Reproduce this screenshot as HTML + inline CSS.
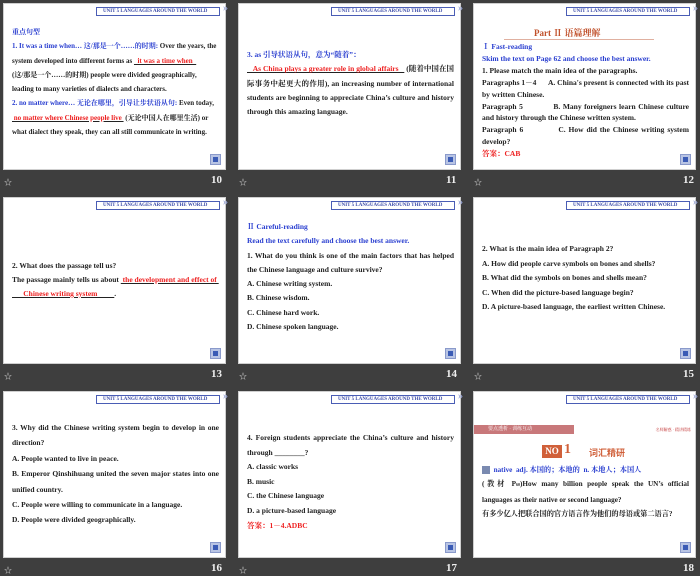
<!DOCTYPE html>
<html><head><meta charset="utf-8">
<style>
*{margin:0;padding:0;box-sizing:border-box}
body{width:700px;height:576px;background:#3e3e3e;position:relative;overflow:hidden;font-family:"Liberation Serif","Noto Serif CJK SC",serif}
.s{position:absolute;width:223px;height:167px;background:#fff;border:1px solid #cfcfcf}
.hd{position:absolute;right:5px;top:3px;width:124px;height:9px;border:1px solid #4a5db5;font-size:5px;color:#3a4aa8;font-weight:bold;line-height:7px;padding-left:6px;white-space:nowrap}
.hd:after{content:"»";position:absolute;right:-9px;top:-3px;font-size:10px;color:#9aa6d8}
.ic{position:absolute;right:4px;bottom:4px;width:11px;height:11px;background:#b8c4e4;border:1px solid #8a9acb}
.ic:before{content:"";position:absolute;left:2px;top:2px;width:5px;height:5px;background:#3a5bb5}
.t{position:absolute;left:8px;right:6px;font-size:7.5px;line-height:14.3px;font-weight:bold;color:#222;text-align:justify}
.b{color:#2a3fd0}.r{color:#ee2020}
.u{text-decoration:underline;text-decoration-color:#222}
.n{position:absolute;color:#eee;font-weight:bold;font-size:11px;font-family:"Liberation Serif",serif}
.st{position:absolute;color:#ddd;font-size:8px}
</style></head><body>

<!-- row 1 -->
<div class="s" style="left:3px;top:3px"><div class="hd">UNIT 5 LANGUAGES AROUND THE WORLD</div>
<div class="t" style="top:21px;font-size:7px;text-align:left"><span class="b">重点句型</span><br><span class="b">1. It was a time when… 这/那是一个……的时期:</span> Over the years, the system developed into different forms as <span class="r u">&nbsp;&nbsp;it was a time when&nbsp;&nbsp;</span><br>(这/那是一个……的时期) people were divided geographically, leading to many varieties of dialects and characters.<br><span class="b">2. no matter where… 无论在哪里，引导让步状语从句:</span> Even today, <span class="r u">&nbsp;no matter where Chinese people live&nbsp;</span> (无论中国人在哪里生活) or what dialect they speak, they can all still communicate in writing.</div>
<div class="ic"></div></div>
<div class="st" style="left:4px;top:177px">☆</div><div class="n" style="left:211px;top:174px">10</div>

<div class="s" style="left:238px;top:3px"><div class="hd">UNIT 5 LANGUAGES AROUND THE WORLD</div>
<div class="t" style="top:44px"><span class="b">3. as 引导状语从句，意为“随着”：</span><br><span class="r u">&nbsp;&nbsp;&nbsp;As China plays a greater role in global affairs&nbsp;&nbsp;&nbsp;</span> (随着中国在国际事务中起更大的作用), an increasing number of international students are beginning to appreciate China’s culture and history through this amazing language.</div>
<div class="ic"></div></div>
<div class="st" style="left:239px;top:177px">☆</div><div class="n" style="left:446px;top:174px">11</div>

<div class="s" style="left:473px;top:3px"><div class="hd">UNIT 5 LANGUAGES AROUND THE WORLD</div>
<div style="position:absolute;left:60px;top:22px;font-size:9px;font-weight:bold;color:#c0502a">Part Ⅱ 语篇理解</div>
<div style="position:absolute;left:30px;top:35px;width:150px;height:1px;background:#e0b0a0"></div>
<div class="t" style="top:37px;line-height:11.9px"><span class="b">Ⅰ Fast-reading<br>Skim the text on Page 62 and choose the best answer.</span><br>1. Please match the main idea of the paragraphs.<br>Paragraphs 1－4 &nbsp;&nbsp;&nbsp;&nbsp;&nbsp;A. China's present is connected with its past by written Chinese.<br>Paragraph 5 &nbsp;&nbsp;&nbsp;&nbsp;&nbsp;&nbsp;&nbsp;&nbsp;&nbsp;&nbsp;&nbsp;B. Many foreigners learn Chinese culture and history through the Chinese written system.<br>Paragraph 6 &nbsp;&nbsp;&nbsp;&nbsp;&nbsp;&nbsp;&nbsp;&nbsp;&nbsp;&nbsp;&nbsp;C. How did the Chinese writing system develop?<br><span class="r">答案：CAB</span></div>
<div class="ic"></div></div>
<div class="st" style="left:474px;top:177px">☆</div><div class="n" style="left:683px;top:174px">12</div>

<!-- row 2 -->
<div class="s" style="left:3px;top:197px"><div class="hd">UNIT 5 LANGUAGES AROUND THE WORLD</div>
<div class="t" style="top:61px;line-height:14px;text-align:left">2. What does the passage tell us?<br>The passage mainly tells us about <span class="r u">&nbsp;the development and effect of&nbsp;</span><br><span class="r u">&nbsp;&nbsp;&nbsp;&nbsp;&nbsp;&nbsp;Chinese writing system&nbsp;&nbsp;&nbsp;&nbsp;&nbsp;&nbsp;&nbsp;&nbsp;&nbsp;</span>.</div>
<div class="ic"></div></div>
<div class="st" style="left:4px;top:371px">☆</div><div class="n" style="left:211px;top:368px">13</div>

<div class="s" style="left:238px;top:197px"><div class="hd">UNIT 5 LANGUAGES AROUND THE WORLD</div>
<div class="t" style="top:22px"><span class="b">Ⅱ Careful-reading<br>Read the text carefully and choose the best answer.</span><br>1. What do you think is one of the main factors that has helped the Chinese language and culture survive?<br>A. Chinese writing system.<br>B. Chinese wisdom.<br>C. Chinese hard work.<br>D. Chinese spoken language.</div>
<div class="ic"></div></div>
<div class="st" style="left:239px;top:371px">☆</div><div class="n" style="left:446px;top:368px">14</div>

<div class="s" style="left:473px;top:197px"><div class="hd">UNIT 5 LANGUAGES AROUND THE WORLD</div>
<div class="t" style="top:44px;line-height:14.6px;text-align:left">2. What is the main idea of Paragraph 2?<br>A. How did people carve symbols on bones and shells?<br>B. What did the symbols on bones and shells mean?<br>C. When did the picture-based language begin?<br>D. A picture-based language, the earliest written Chinese.</div>
<div class="ic"></div></div>
<div class="st" style="left:474px;top:371px">☆</div><div class="n" style="left:683px;top:368px">15</div>

<!-- row 3 -->
<div class="s" style="left:3px;top:391px"><div class="hd">UNIT 5 LANGUAGES AROUND THE WORLD</div>
<div class="t" style="top:28px;line-height:15.4px">3. Why did the Chinese writing system begin to develop in one direction?<br>A. People wanted to live in peace.<br>B. Emperor Qinshihuang united the seven major states into one unified country.<br>C. People were willing to communicate in a language.<br>D. People were divided geographically.</div>
<div class="ic"></div></div>
<div class="st" style="left:4px;top:565px">☆</div><div class="n" style="left:211px;top:562px">16</div>

<div class="s" style="left:238px;top:391px"><div class="hd">UNIT 5 LANGUAGES AROUND THE WORLD</div>
<div class="t" style="top:39px;line-height:14.6px">4. Foreign students appreciate the China’s culture and history through ________?<br>A. classic works<br>B. music<br>C. the Chinese language<br>D. a picture-based language<br><span class="r">答案：1－4.ADBC</span></div>
<div class="ic"></div></div>
<div class="st" style="left:239px;top:565px">☆</div><div class="n" style="left:446px;top:562px">17</div>

<div class="s" style="left:473px;top:391px"><div class="hd">UNIT 5 LANGUAGES AROUND THE WORLD</div>
<div style="position:absolute;left:0;top:33px;width:100px;height:9px;background:#c8787a;color:#fff;font-size:5px;line-height:9px;padding-left:14px">要点透析 · 训练互动</div>
<div style="position:absolute;right:4px;top:35px;font-size:4px;color:#c03030">名师解惑 · 精讲精练</div>
<div style="position:absolute;left:68px;top:53px;width:20px;height:13px;background:#d0603a;color:#fff;font-size:9px;font-weight:bold;line-height:13px;text-align:center">NO</div>
<div style="position:absolute;left:90px;top:50px;font-size:14px;color:#d0603a;font-weight:bold">1</div>
<div style="position:absolute;left:115px;top:54px;font-size:9px;color:#d0603a;font-weight:bold;font-family:'Noto Sans CJK SC',sans-serif">词汇精研</div>
<div class="t" style="top:71px;font-size:7.2px"><span class="b"><span style="display:inline-block;width:8px;height:8px;background:#7a8ab0;vertical-align:middle"></span> &nbsp;native &nbsp;adj. 本国的；本地的 &nbsp;n. 本地人；本国人</span><br>(教材 P<span style="font-size:4px">60</span>)How many billion people speak the UN’s official languages as their native or second language?<br>有多少亿人把联合国的官方语言作为他们的母语或第二语言?</div>
<div class="ic"></div></div>
<div class="n" style="left:683px;top:562px">18</div>

</body></html>
